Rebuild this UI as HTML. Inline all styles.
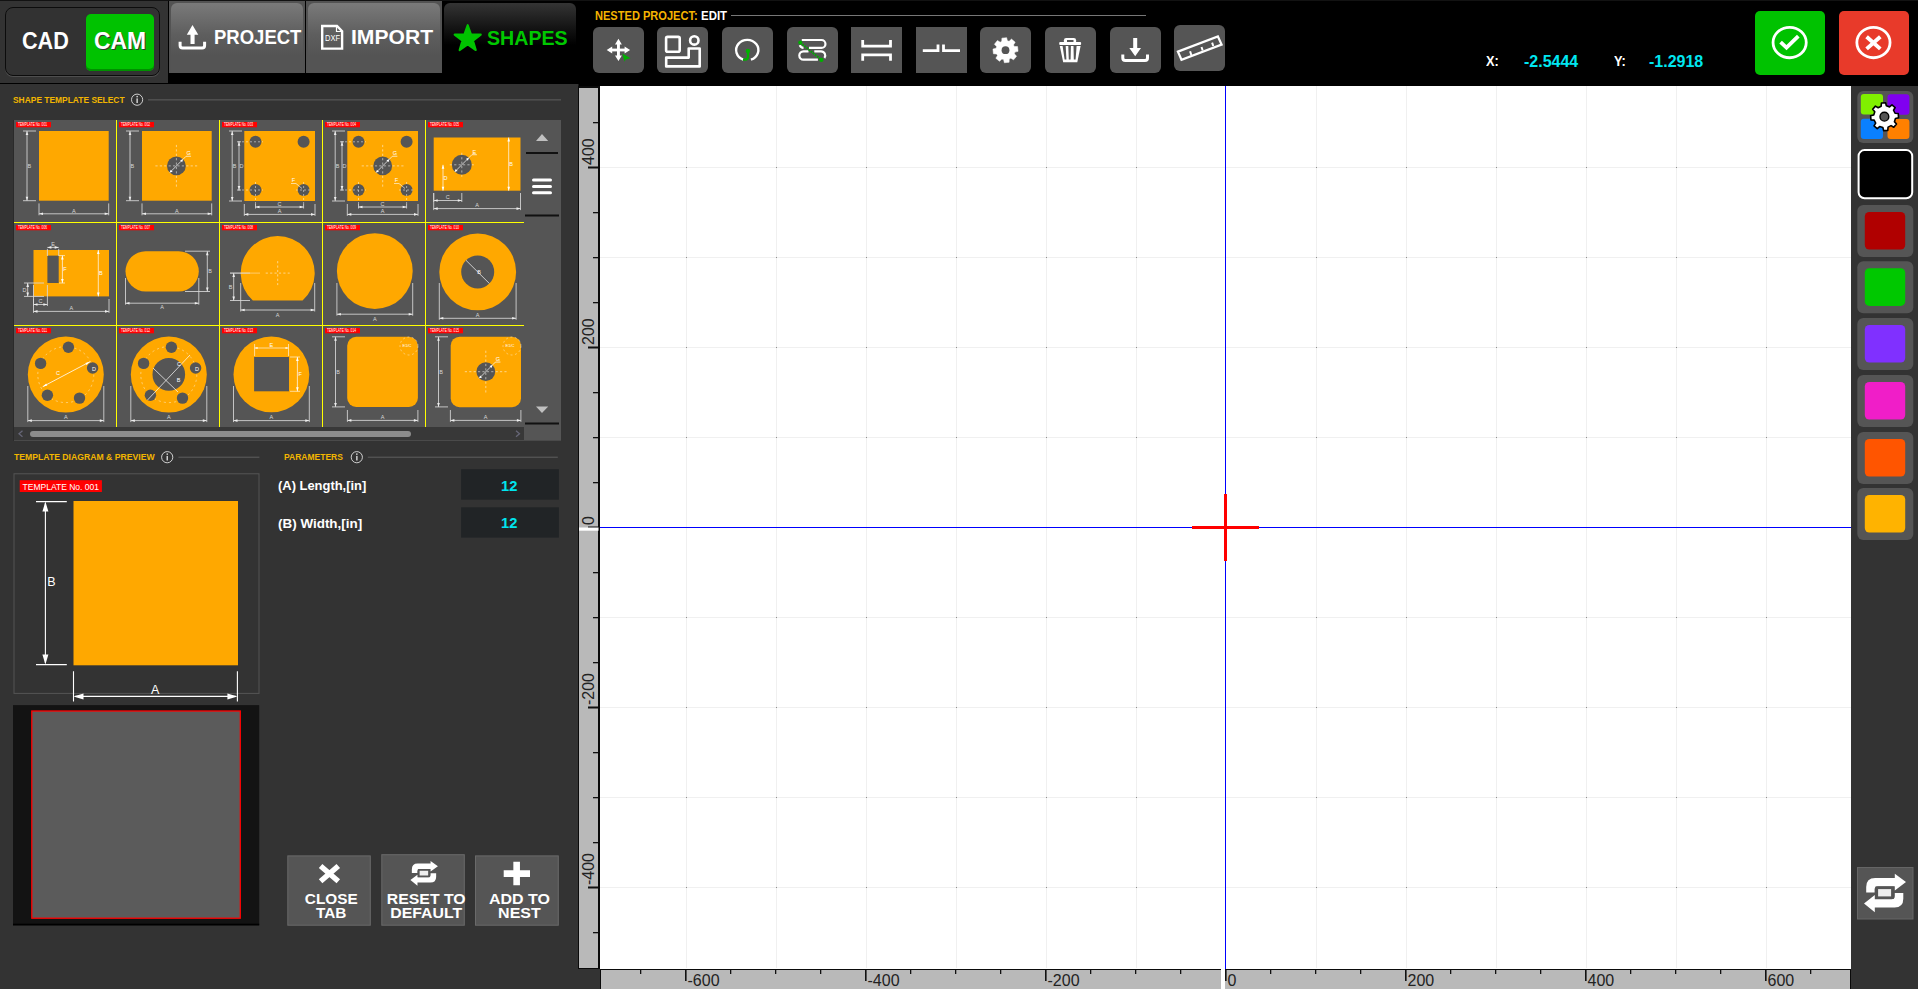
<!DOCTYPE html>
<html><head><meta charset="utf-8">
<style>
*{box-sizing:border-box;margin:0;padding:0}
html,body{width:1918px;height:989px;overflow:hidden;background:#000;font-family:"Liberation Sans",sans-serif;font-weight:bold;color:#fff}
.a{position:absolute}
.t{position:absolute;white-space:nowrap;transform-origin:0 50%;line-height:1}
svg{position:absolute;overflow:visible}
</style></head><body>

<!-- CAD/CAM -->
<div class="a" style="left:0;top:1px;width:168px;height:82px;background:#333"></div>
<div class="a" style="left:5px;top:7px;width:155px;height:69px;border:1.5px solid #0c0c0c;border-radius:8px;background:#323232;box-shadow:0 1px 0 #4e4e4e"></div>
<div class="t" style="left:22.2px;top:30.3px;font-size:23px;transform:scaleX(.94)">CAD</div>
<div class="a" style="left:86px;top:14px;width:68px;height:57px;background:#00c200;border-radius:5px;box-shadow:inset 0 -2px 0 #009000"></div>
<div class="t" style="left:93.8px;top:30.3px;font-size:23px;transform:scaleX(.995);text-shadow:1px 1px 0 #333">CAM</div>

<!-- top tabs -->
<div class="a" style="left:0;top:0;width:1918px;height:1px;background:#121212"></div>
<div class="a" style="left:169px;top:1px;width:136px;height:72px;background:#535353"></div>
<div class="a" style="left:306px;top:1px;width:136px;height:72px;background:#535353"></div>
<div class="a" style="left:171px;top:3px;width:132px;height:70px;border-radius:6px 6px 0 0;background:linear-gradient(#7a7a7a,#5e5e5e 45%,#545454 75%)"></div>
<div class="a" style="left:308px;top:3px;width:132px;height:70px;border-radius:6px 6px 0 0;background:linear-gradient(#7a7a7a,#5e5e5e 45%,#545454 75%)"></div>
<div class="a" style="left:444px;top:3px;width:132px;height:70px;border-radius:6px 6px 0 0;background:linear-gradient(#343434,#101010 40%,#000 60%)"></div>
<div class="t" style="left:213.8px;top:27.4px;font-size:20px;transform:scaleX(.925)">PROJECT</div>
<div class="t" style="left:350.5px;top:27.2px;font-size:20px;transform:scaleX(1.055)">IMPORT</div>
<div class="t" style="left:487px;top:27.6px;font-size:20px;color:#00c800;transform:scaleX(.98)">SHAPES</div>

<!-- nested project label -->
<div class="t" style="left:595px;top:9.8px;font-size:12.3px;color:#f5b400;transform:scaleX(.9)">NESTED PROJECT:</div>
<div class="t" style="left:701px;top:9.8px;font-size:12.3px;transform:scaleX(.93)">EDIT</div>
<div class="a" style="left:731px;top:15px;width:415px;height:1px;background:#777"></div>

<!-- coordinates -->
<div class="t" style="left:1486px;top:53.2px;font-size:15px;transform:scaleX(.85)">X:</div>
<div class="t" style="left:1524px;top:54px;font-size:16px;color:#00e6f0">-2.5444</div>
<div class="t" style="left:1614px;top:53.2px;font-size:15px;transform:scaleX(.85)">Y:</div>
<div class="t" style="left:1649px;top:54px;font-size:16px;color:#00e6f0">-1.2918</div>

<!-- ok / cancel -->
<div class="a" style="left:1755px;top:11px;width:70px;height:64px;background:#00c200;border-radius:5px"></div>
<div class="a" style="left:1839px;top:11px;width:70px;height:64px;background:#e83a2a;border-radius:5px"></div>

<!-- header icons -->
<svg style="left:0;top:0" width="1918" height="86" viewBox="0 0 1918 86">
 <!-- upload -->
 <path d="M192.5,25 L198.3,34.8 L194.6,34.8 L194.6,44 L190.5,44 L190.5,34.8 L186.8,34.8Z" fill="#fff"/>
 <path d="M180.1,41.7 V45.5 Q180.1,48 182.6,48 H202.1 Q204.6,48 204.6,45.5 V41.7" fill="none" stroke="#fff" stroke-width="3"/>
 <!-- dxf doc -->
 <path d="M322.2,26 H337 L342.1,31.2 V48.6 H322.2Z" fill="none" stroke="#fff" stroke-width="2.4"/>
 <path d="M336.5,26 V31.5 H342" fill="none" stroke="#fff" stroke-width="1.2"/>
 <text x="325" y="41.3" font-family="Liberation Sans" font-size="8.6" font-weight="normal" fill="#fff" textLength="15" lengthAdjust="spacingAndGlyphs">DXF</text>
 <!-- star -->
 <polygon points="467.7,25.1 471.0,34.4 480.8,34.6 473.0,40.6 475.8,50.1 467.7,44.5 459.6,50.1 462.4,40.6 454.6,34.6 464.4,34.4" fill="#00c400" stroke="#00c400" stroke-width="2" stroke-linejoin="round"/>
 <!-- toolbar buttons -->
 <g fill="#555">
  <rect x="593" y="27" width="51" height="46" rx="6"/>
  <rect x="657" y="27" width="51" height="46" rx="6"/>
  <rect x="722" y="27" width="51" height="46" rx="6"/>
  <rect x="787" y="27" width="51" height="46" rx="6"/>
  <rect x="851" y="27" width="51" height="46"/>
  <rect x="916" y="27" width="51" height="46"/>
  <rect x="980" y="27" width="51" height="46" rx="6"/>
  <rect x="1045" y="27" width="51" height="46" rx="6"/>
  <rect x="1110" y="27" width="51" height="46" rx="6"/>
  <rect x="1174" y="25" width="51" height="46" rx="6"/>
 </g>
 <!-- move -->
 <g fill="#fff">
  <rect x="611" y="48.6" width="15" height="2.8"/>
  <rect x="617" y="43" width="2.9" height="14"/>
  <path d="M606.7,50 L612.2,46.6 V53.4Z M630.1,50 L624.6,46.6 V53.4Z M618.45,38.8 L615,44.4 H621.9Z M618.45,61 L615,55.4 H621.9Z"/>
 </g>
 <path d="M622.3,53.4 L630.6,58.3 L625.8,59.2 L624.6,61.8Z" fill="#00b000"/>
 <!-- shapes -->
 <g fill="none" stroke="#fff" stroke-width="2.6">
  <rect x="666.1" y="36.9" width="13.6" height="14.9" rx="1.5"/>
  <circle cx="694.3" cy="40.4" r="4.2"/>
  <path d="M688.7,48.5 H699.7 V66.4 H666.2 V57.6 H688.7Z" stroke-linejoin="round"/>
 </g>
 <!-- circle lead -->
 <path d="M743.3,59.6 A11.1,10.2 0 1 1 750.9,59.7" fill="none" stroke="#fff" stroke-width="2.4"/>
 <path d="M748,51 V56.8 Q748,59.6 745,59.7 H743" fill="none" stroke="#00b000" stroke-width="2.3"/>
 <circle cx="747.9" cy="50.9" r="2.2" fill="#00b000"/>
 <!-- obround -->
 <g fill="none" stroke="#fff" stroke-width="2.2">
  <path d="M801.8,40 H821.5 A3.95,3.95 0 0 1 821.5,47.9 H809 M803.5,47.9 A3.95,3.95 0 0 1 799.8,45.2"/>
  <path d="M808.5,51.3 H803.5 A4.2,4.2 0 0 0 803.5,59.7 H817.9 M814.3,51.3 H821 A4.2,4.2 0 0 1 824.4,58"/>
 </g>
 <line x1="800.3" y1="42.6" x2="821.4" y2="59.9" stroke="#00a800" stroke-width="2" stroke-dasharray="1.7 1"/>
 <circle cx="800.3" cy="42.6" r="2.1" fill="#00b000"/><circle cx="821.4" cy="59.9" r="2.1" fill="#00b000"/>
 <!-- brackets -->
 <g fill="none" stroke="#fff" stroke-width="2.8" stroke-linecap="butt">
  <path d="M862.7,40 V46.2 H890.5 V40"/>
  <path d="M862.7,60.8 V54.8 H890.5 V60.8"/>
  <path d="M922.8,50.6 H938 V44.6 M943.5,44.6 V50.6 H960"/>
 </g>
 <!-- gear -->
 <path d="M1014.34,46.46 L1017.57,46.60 L1018.05,51.33 L1014.91,52.11 L1014.40,53.81 L1016.59,56.19 L1013.57,59.87 L1010.80,58.20 L1009.24,59.04 L1009.10,62.27 L1004.37,62.75 L1003.59,59.61 L1001.89,59.10 L999.51,61.29 L995.83,58.27 L997.50,55.50 L996.66,53.94 L993.43,53.80 L992.95,49.07 L996.09,48.29 L996.60,46.59 L994.41,44.21 L997.43,40.53 L1000.20,42.20 L1001.76,41.36 L1001.90,38.13 L1006.63,37.65 L1007.41,40.79 L1009.11,41.30 L1011.49,39.11 L1015.17,42.13 L1013.50,44.90Z" fill="#fff" stroke="#fff" stroke-width=".5" stroke-linejoin="round"/>
 <circle cx="1005.5" cy="50.2" r="3.9" fill="#555"/>
 <!-- trash -->
 <path d="M1063.9,42.2 V40.2 Q1063.9,37.9 1066.2,37.9 H1073.8 Q1076.1,37.9 1076.1,40.2 V42.2Z" fill="#fff"/>
 <rect x="1067" y="40" width="6.5" height="2.3" fill="#555"/>
 <rect x="1059.2" y="42.1" width="21.9" height="2.9" rx="1" fill="#fff"/>
 <path d="M1059.8,46 H1080.6 L1077.3,62.2 H1063.2Z" fill="#fff"/>
 <path d="M1062.6,46 H1065.7 L1066.4,59.5 H1064.6Z M1068.3,46 H1070.9 L1070.6,59.5 H1068.8Z M1073.5,46 H1076.6 L1075.6,59.5 H1073.8Z" fill="#555"/>
 <!-- download -->
 <path d="M1133.2,38 H1137.2 V48 H1141 L1135.2,56.2 L1129.3,48 H1133.2Z" fill="#fff"/>
 <path d="M1122.8,54.6 V58 Q1122.8,60.5 1125.3,60.5 H1145 Q1147.5,60.5 1147.5,58 V54.6" fill="none" stroke="#fff" stroke-width="3"/>
 <!-- ruler -->
 <g fill="none" stroke="#fff" stroke-width="2.2" stroke-linejoin="miter">
  <path d="M1177.9,51.6 L1217.9,36.5 L1221.6,44.6 L1181.5,59.8Z"/>
  <path d="M1191.3,55 L1190.1,51.3 M1202.7,50.5 L1201.5,47 M1213.3,46 L1212.1,42.7" stroke-width="2"/>
 </g>
 <!-- ok / cancel icons -->
 <ellipse cx="1789.65" cy="42.55" rx="16.6" ry="15.2" fill="none" stroke="#fff" stroke-width="2.8"/>
 <path d="M1780.6,42.2 L1786.5,47.6 L1798.3,36.2" fill="none" stroke="#fff" stroke-width="3.8"/>
 <ellipse cx="1873.45" cy="42.55" rx="16.6" ry="15.2" fill="none" stroke="#fff" stroke-width="2.8"/>
 <path d="M1866.6,36.8 L1880.3,48.9 M1880.3,36.8 L1866.6,48.9" fill="none" stroke="#fff" stroke-width="3.9"/>
</svg>

<!-- left panel -->
<div class="a" style="left:0;top:84px;width:578px;height:905px;background:#333"></div>
<div class="a" style="left:578px;top:84px;width:1px;height:905px;background:#161616"></div>

<!-- panel titles -->
<div class="t" style="left:12.6px;top:95.5px;font-size:9.3px;color:#f2b600;transform:scaleX(.905)">SHAPE TEMPLATE SELECT</div>
<div class="t" style="left:14.2px;top:453.1px;font-size:9.3px;color:#f2b600;transform:scaleX(.93)">TEMPLATE DIAGRAM &amp; PREVIEW</div>
<div class="t" style="left:283.9px;top:453px;font-size:9.3px;color:#f2b600;transform:scaleX(.914)">PARAMETERS</div>
<svg style="left:0;top:0" width="580" height="989" viewBox="0 0 580 989" font-family="Liberation Sans">
 <g fill="none" stroke="#cfcfcf" stroke-width="1">
  <circle cx="137.1" cy="99.7" r="5.6"/>
  <circle cx="167.2" cy="457.2" r="5.6"/>
  <circle cx="356.8" cy="457.2" r="5.6"/>
 </g>
 <g fill="#cfcfcf">
  <rect x="136.4" y="98.4" width="1.5" height="4.6"/><circle cx="137.15" cy="96.6" r=".85"/>
  <rect x="166.5" y="455.9" width="1.5" height="4.6"/><circle cx="167.25" cy="454.1" r=".85"/>
  <rect x="356.1" y="455.9" width="1.5" height="4.6"/><circle cx="356.85" cy="454.1" r=".85"/>
 </g>
 <g fill="#555">
  <rect x="148" y="99.2" width="413" height="1.3"/>
  <rect x="178.4" y="456.6" width="81" height="1.3"/>
  <rect x="367.8" y="456.6" width="190" height="1.3"/>
 </g>
 <!-- diagram box -->
 <rect x="14" y="473.8" width="245" height="219.6" fill="none" stroke="#555" stroke-width="1"/>
 <rect x="19.7" y="480.2" width="82.2" height="11.8" fill="#f00"/>
 <text x="22.5" y="489.6" font-size="9" font-weight="normal" fill="#fff" textLength="76.5" lengthAdjust="spacingAndGlyphs">TEMPLATE No. 001</text>
 <rect x="73.5" y="501" width="164.5" height="164.3" fill="#ffa800"/>
 <g stroke="#fff" stroke-width="1.1" fill="none">
  <path d="M45.4,503 V663 M36,501.6 H66.8 M36,664.6 H66.8"/>
  <path d="M75,696.4 H236 M73.5,671.3 V701.6 M237.4,671.3 V701.6"/>
 </g>
 <g fill="#fff">
  <path d="M45.4,501.6 l-3,10 h6z M45.4,664.6 l-3,-10 h6z"/>
  <path d="M73.5,696.4 l10,-3 v6z M237.4,696.4 l-10,-3 v6z"/>
 </g>
 <text x="51.3" y="586.2" font-size="12.5" font-weight="normal" fill="#fff" text-anchor="middle">B</text>
 <text x="155.2" y="694" font-size="12.5" font-weight="normal" fill="#fff" text-anchor="middle">A</text>
 <!-- preview -->
 <rect x="13" y="705.1" width="246.2" height="220.2" fill="#131313"/>
 <rect x="31.8" y="711" width="208.5" height="207.2" fill="#5b5b5b" stroke="#f00" stroke-width="1.3"/>
 <rect x="13" y="923.7" width="246.2" height="1.7" fill="#000"/>
 <!-- inputs -->
 <rect x="461.1" y="469.2" width="97.8" height="30.5" fill="#212426"/>
 <rect x="461.1" y="507.3" width="97.8" height="30.3" fill="#212426"/>
 <!-- buttons -->
 <g fill="#555" stroke="#6a6a6a" stroke-width="1">
  <rect x="287.8" y="855.9" width="82.5" height="69.3"/>
  <rect x="381.8" y="854.7" width="82.5" height="70.5"/>
  <rect x="475.5" y="855.9" width="82.8" height="69.3"/>
 </g>
 <path d="M320.6,866 L338.3,881.3 M338.3,866 L320.6,881.3" stroke="#fff" stroke-width="5.4"/>
 <path d="M503.7,873.65 H530 M516.65,861.8 V885.3" stroke="#fff" stroke-width="6.6"/>
 <!-- reset icon -->
 <g transform="translate(410.4 860.9) scale(.655 .646) translate(-1864 -873.8)">
 <g fill="#fff">
  <path d="M1866.2,892.6 V887 Q1866.2,878 1875.2,878 H1894.8 V873.8 L1906,882.1 L1894.8,890.4 V886.2 H1878 Q1874.6,886.2 1874.6,889.6 V892.6 Z"/>
  <path d="M1903.3,893.1 V898.7 Q1903.3,907.4 1894.6,907.4 H1874.8 V912.2 L1864,903.5 L1874.8,895.1 V899.2 H1891.6 Q1894.8,899.2 1894.8,896 V893.1 Z"/>
 </g>
 <rect x="1876.8" y="887.8" width="15.6" height="9.9" fill="#eee" stroke="#555" stroke-width="2.6"/>
 </g>
</svg>
<div class="t" style="left:278px;top:480.3px;font-size:12.8px;transform:scaleX(1.01)">(A) Length,[in]</div>
<div class="t" style="left:278px;top:517.8px;font-size:12.8px;transform:scaleX(1.05)">(B) Width,[in]</div>
<div class="t" style="left:501px;top:477.9px;font-size:15px;color:#00e5ee;transform:scaleX(.98)">12</div>
<div class="t" style="left:501px;top:515.3px;font-size:15px;color:#00e5ee;transform:scaleX(.98)">12</div>
<div class="a" style="left:289.8px;top:892px;width:82.5px;text-align:center;font-size:15.5px;line-height:13.7px;transform:scaleX(.99)">CLOSE<br>TAB</div>
<div class="a" style="left:384.8px;top:892px;width:82.5px;text-align:center;font-size:15.5px;line-height:13.7px;transform:scaleX(1.02)">RESET TO<br>DEFAULT</div>
<div class="a" style="left:477.8px;top:892px;width:82.8px;text-align:center;font-size:15.5px;line-height:13.7px;transform:scaleX(1.03)">ADD TO<br>NEST</div>

<!-- CELLS_START -->
<svg style="left:0;top:0" width="580" height="445" viewBox="0 0 580 445" font-family="Liberation Sans">
<rect x="14" y="120" width="547" height="320.7" fill="#555"/>
<rect x="13" y="120" width="1" height="320.7" fill="#2a2a2a"/>
<rect x="14" y="427" width="510" height="13" fill="#383838"/>
<rect x="30" y="431" width="381" height="6" rx="3" fill="#8c8c8c"/>
<path d="M22.5,430.8 L19,433.8 L22.5,436.8 M516,430.8 L519.5,433.8 L516,436.8" stroke="#667" stroke-width="1.3" fill="none"/>
<g fill="#ff0">
<rect x="116" y="120" width="1" height="307"/>
<rect x="219" y="120" width="1" height="307"/>
<rect x="322" y="120" width="1" height="307"/>
<rect x="425" y="120" width="1" height="307"/>
<rect x="14" y="222" width="510" height="1"/>
<rect x="14" y="325" width="510" height="1"/>
</g>
<g transform="translate(14 120)"><rect x="2" y="2" width="35" height="5.3" fill="#f00"/><text x="4" y="6.4" font-size="4.5" font-weight="normal" fill="#fff" textLength="29" lengthAdjust="spacingAndGlyphs">TEMPLATE No. 001</text><rect x="25" y="11" width="69.7" height="69.7" fill="#ffa800"/><path d="M13,11V80.7M9,11H22M9,80.7H22" stroke="#d8d8d8" stroke-width=".85" fill="none"/><path d="M13,11 L11.7,15 L14.3,15Z" fill="#eee"/><path d="M13,80.7 L11.7,76.7 L14.3,76.7Z" fill="#eee"/><text x="15.3" y="47.85" font-size="5.5" font-weight="normal" fill="#d8d8d8" text-anchor="middle">B</text><path d="M25,93.8H94.7M25,83.4V95.3M94.7,83.4V95.3" stroke="#d8d8d8" stroke-width=".85" fill="none"/><path d="M25,93.8 L29,92.5 L29,95.1Z" fill="#eee"/><path d="M94.7,93.8 L90.7,92.5 L90.7,95.1Z" fill="#eee"/><text x="59.85" y="92.6" font-size="5.5" font-weight="normal" fill="#d8d8d8" text-anchor="middle">A</text></g>
<g transform="translate(117 120)"><rect x="2" y="2" width="35" height="5.3" fill="#f00"/><text x="4" y="6.4" font-size="4.5" font-weight="normal" fill="#fff" textLength="29" lengthAdjust="spacingAndGlyphs">TEMPLATE No. 002</text><rect x="25" y="11" width="69.7" height="69.7" fill="#ffa800"/><circle cx="59.4" cy="45.9" r="9.4" fill="#555"/><path d="M38.4,45.9H80.4M59.4,24.9V66.9" stroke="#fff" stroke-opacity=".75" stroke-width=".7" stroke-dasharray="2.2 2.2" fill="none"/><path d="M52.75,52.55L66.05,39.25L69.05,36.25H74.05" stroke="#fff" stroke-width=".7" fill="none"/><path d="M52.75,52.55l2.9,-.9l-2,-2z M66.05,39.25l-2.9,.9l2,2z" fill="#fff"/><text x="71.55" y="35.25" font-size="5.5" font-weight="normal" fill="#fff" text-anchor="middle">G</text><path d="M13,11V80.7M9,11H22M9,80.7H22" stroke="#d8d8d8" stroke-width=".85" fill="none"/><path d="M13,11 L11.7,15 L14.3,15Z" fill="#eee"/><path d="M13,80.7 L11.7,76.7 L14.3,76.7Z" fill="#eee"/><text x="15.3" y="47.85" font-size="5.5" font-weight="normal" fill="#d8d8d8" text-anchor="middle">B</text><path d="M25,93.8H94.7M25,83.4V95.3M94.7,83.4V95.3" stroke="#d8d8d8" stroke-width=".85" fill="none"/><path d="M25,93.8 L29,92.5 L29,95.1Z" fill="#eee"/><path d="M94.7,93.8 L90.7,92.5 L90.7,95.1Z" fill="#eee"/><text x="59.85" y="92.6" font-size="5.5" font-weight="normal" fill="#d8d8d8" text-anchor="middle">A</text></g>
<g transform="translate(220 120)"><rect x="2" y="2" width="35" height="5.3" fill="#f00"/><text x="4" y="6.4" font-size="4.5" font-weight="normal" fill="#fff" textLength="29" lengthAdjust="spacingAndGlyphs">TEMPLATE No. 003</text><rect x="24.3" y="11" width="70.7" height="70" fill="#ffa800"/><circle cx="35.5" cy="21.8" r="6" fill="#555"/><circle cx="83.6" cy="21.8" r="6" fill="#555"/><circle cx="35.5" cy="70" r="6" fill="#555"/><circle cx="83.6" cy="70" r="6" fill="#555"/><path d="M18,21.8H43 M18,70H43 M35.5,62V84 M83.6,62V84 M76,70H92" stroke="#fff" stroke-opacity=".7" stroke-width=".7" stroke-dasharray="2 2" fill="none"/><path d="M71,63.5 H76 L82,68.5" stroke="#fff" stroke-width=".6" fill="none"/><text x="73.5" y="61.5" font-size="5.5" font-weight="normal" fill="#fff" text-anchor="middle">F</text><path d="M12.2,11V81M9,11H22M9,81H22" stroke="#d8d8d8" stroke-width=".85" fill="none"/><path d="M12.2,11 L10.9,15 L13.5,15Z" fill="#eee"/><path d="M12.2,81 L10.9,77 L13.5,77Z" fill="#eee"/><text x="14.5" y="48" font-size="5.5" font-weight="normal" fill="#d8d8d8" text-anchor="middle">B</text><path d="M19,21.8V70M17,21.8H21M17,70H21" stroke="#d8d8d8" stroke-width=".85" fill="none"/><path d="M19,21.8 L17.7,25.8 L20.3,25.8Z" fill="#eee"/><path d="M19,70 L17.7,66 L20.3,66Z" fill="#eee"/><text x="21.5" y="47.9" font-size="5.5" font-weight="normal" fill="#d8d8d8" text-anchor="middle">D</text><path d="M35.5,87H83.6M35.5,84V88.5M83.6,84V88.5" stroke="#d8d8d8" stroke-width=".85" fill="none"/><path d="M35.5,87 L39.5,85.7 L39.5,88.3Z" fill="#eee"/><path d="M83.6,87 L79.6,85.7 L79.6,88.3Z" fill="#eee"/><text x="59.55" y="85.8" font-size="5.5" font-weight="normal" fill="#d8d8d8" text-anchor="middle">C</text><path d="M24.3,94.4H95M24.3,84V95.9M95,84V95.9" stroke="#d8d8d8" stroke-width=".85" fill="none"/><path d="M24.3,94.4 L28.3,93.1 L28.3,95.7Z" fill="#eee"/><path d="M95,94.4 L91,93.1 L91,95.7Z" fill="#eee"/><text x="59.65" y="93.2" font-size="5.5" font-weight="normal" fill="#d8d8d8" text-anchor="middle">A</text></g>
<g transform="translate(323 120)"><rect x="2" y="2" width="35" height="5.3" fill="#f00"/><text x="4" y="6.4" font-size="4.5" font-weight="normal" fill="#fff" textLength="29" lengthAdjust="spacingAndGlyphs">TEMPLATE No. 004</text><rect x="24.3" y="11" width="70.7" height="70" fill="#ffa800"/><circle cx="35.5" cy="21.8" r="6" fill="#555"/><circle cx="83.6" cy="21.8" r="6" fill="#555"/><circle cx="35.5" cy="70" r="6" fill="#555"/><circle cx="83.6" cy="70" r="6" fill="#555"/><path d="M18,21.8H43 M18,70H43 M35.5,62V84 M83.6,62V84 M76,70H92" stroke="#fff" stroke-opacity=".7" stroke-width=".7" stroke-dasharray="2 2" fill="none"/><circle cx="59.7" cy="45.9" r="9.4" fill="#555"/><path d="M38.7,45.9H80.7M59.7,24.9V66.9" stroke="#fff" stroke-opacity=".75" stroke-width=".7" stroke-dasharray="2.2 2.2" fill="none"/><path d="M53.05,52.55L66.35,39.25L69.35,36.25H74.35" stroke="#fff" stroke-width=".7" fill="none"/><path d="M53.05,52.55l2.9,-.9l-2,-2z M66.35,39.25l-2.9,.9l2,2z" fill="#fff"/><text x="71.85" y="35.25" font-size="5.5" font-weight="normal" fill="#fff" text-anchor="middle">G</text><path d="M71,63.5 H76 L82,68.5" stroke="#fff" stroke-width=".6" fill="none"/><text x="73.5" y="61.5" font-size="5.5" font-weight="normal" fill="#fff" text-anchor="middle">F</text><path d="M12.2,11V81M9,11H22M9,81H22" stroke="#d8d8d8" stroke-width=".85" fill="none"/><path d="M12.2,11 L10.9,15 L13.5,15Z" fill="#eee"/><path d="M12.2,81 L10.9,77 L13.5,77Z" fill="#eee"/><text x="14.5" y="48" font-size="5.5" font-weight="normal" fill="#d8d8d8" text-anchor="middle">B</text><path d="M19,21.8V70M17,21.8H21M17,70H21" stroke="#d8d8d8" stroke-width=".85" fill="none"/><path d="M19,21.8 L17.7,25.8 L20.3,25.8Z" fill="#eee"/><path d="M19,70 L17.7,66 L20.3,66Z" fill="#eee"/><text x="21.5" y="47.9" font-size="5.5" font-weight="normal" fill="#d8d8d8" text-anchor="middle">D</text><path d="M35.5,87H83.6M35.5,84V88.5M83.6,84V88.5" stroke="#d8d8d8" stroke-width=".85" fill="none"/><path d="M35.5,87 L39.5,85.7 L39.5,88.3Z" fill="#eee"/><path d="M83.6,87 L79.6,85.7 L79.6,88.3Z" fill="#eee"/><text x="59.55" y="85.8" font-size="5.5" font-weight="normal" fill="#d8d8d8" text-anchor="middle">C</text><path d="M24.3,94.4H95M24.3,84V95.9M95,84V95.9" stroke="#d8d8d8" stroke-width=".85" fill="none"/><path d="M24.3,94.4 L28.3,93.1 L28.3,95.7Z" fill="#eee"/><path d="M95,94.4 L91,93.1 L91,95.7Z" fill="#eee"/><text x="59.65" y="93.2" font-size="5.5" font-weight="normal" fill="#d8d8d8" text-anchor="middle">A</text></g>
<g transform="translate(426 120)"><rect x="2" y="2" width="35" height="5.3" fill="#f00"/><text x="4" y="6.4" font-size="4.5" font-weight="normal" fill="#fff" textLength="29" lengthAdjust="spacingAndGlyphs">TEMPLATE No. 005</text><rect x="7.7" y="17.5" width="86.8" height="53.2" fill="#ffa800"/><circle cx="35.8" cy="44.8" r="10" fill="#555"/><path d="M23.8,44.8H47.8M35.8,32.8V56.8" stroke="#fff" stroke-opacity=".75" stroke-width=".7" stroke-dasharray="2.2 2.2" fill="none"/><path d="M28.73,51.87L42.87,37.73L45.87,34.73H50.87" stroke="#fff" stroke-width=".7" fill="none"/><path d="M28.73,51.87l2.9,-.9l-2,-2z M42.87,37.73l-2.9,.9l2,2z" fill="#fff"/><text x="48.37" y="33.73" font-size="5.5" font-weight="normal" fill="#fff" text-anchor="middle">E</text><path d="M82.7,17.5V70.7" stroke="#fff" stroke-width=".7" fill="none"/><path d="M82.7,17.5 L81.4,21.5 L84,21.5Z M82.7,70.7 L81.4,66.7 L84,66.7Z" fill="#fff"/><text x="85.2" y="46.1" font-size="5.5" font-weight="normal" fill="#fff" text-anchor="middle">B</text><path d="M17,44.8V70.7" stroke="#fff" stroke-width=".7" fill="none"/><path d="M17,44.8 L15.7,48.8 L18.3,48.8Z M17,70.7 L15.7,66.7 L18.3,66.7Z" fill="#fff"/><text x="19.5" y="59.75" font-size="5.5" font-weight="normal" fill="#fff" text-anchor="middle">D</text><path d="M7.7,80.5H35.8M7.7,73V82M35.8,73V82" stroke="#d8d8d8" stroke-width=".85" fill="none"/><path d="M7.7,80.5 L11.7,79.2 L11.7,81.8Z" fill="#eee"/><path d="M35.8,80.5 L31.8,79.2 L31.8,81.8Z" fill="#eee"/><text x="21.75" y="79.3" font-size="5.5" font-weight="normal" fill="#d8d8d8" text-anchor="middle">C</text><path d="M7.7,88.6H94.5M7.7,73V90.1M94.5,73V90.1" stroke="#d8d8d8" stroke-width=".85" fill="none"/><path d="M7.7,88.6 L11.7,87.3 L11.7,89.9Z" fill="#eee"/><path d="M94.5,88.6 L90.5,87.3 L90.5,89.9Z" fill="#eee"/><text x="51.1" y="87.4" font-size="5.5" font-weight="normal" fill="#d8d8d8" text-anchor="middle">A</text></g>
<g transform="translate(14 223)"><rect x="2" y="2" width="35" height="5.3" fill="#f00"/><text x="4" y="6.4" font-size="4.5" font-weight="normal" fill="#fff" textLength="29" lengthAdjust="spacingAndGlyphs">TEMPLATE No. 006</text><rect x="19.5" y="27" width="75.5" height="46.4" fill="#ffa800"/><rect x="33.4" y="32.6" width="11.3" height="27.4" fill="#555"/><path d="M84.3,27V73.4" stroke="#fff" stroke-width=".7" fill="none"/><path d="M84.3,27 L83,31 L85.6,31Z M84.3,73.4 L83,69.4 L85.6,69.4Z" fill="#fff"/><text x="86.8" y="52.2" font-size="5.5" font-weight="normal" fill="#fff" text-anchor="middle">B</text><path d="M48.4,32.6V60" stroke="#fff" stroke-width=".7" fill="none"/><path d="M48.4,32.6 L47.1,36.6 L49.7,36.6Z M48.4,60 L47.1,56 L49.7,56Z" fill="#fff"/><text x="50.9" y="48.3" font-size="5.5" font-weight="normal" fill="#fff" text-anchor="middle">F</text><path d="M45,32.6H51 M45,60H51" stroke="#fff" stroke-width=".6"/><path d="M33.4,24.4H44.7M33.4,33V25.9M44.7,33V25.9" stroke="#d8d8d8" stroke-width=".85" fill="none"/><path d="M33.4,24.4 L37.4,23.1 L37.4,25.7Z" fill="#eee"/><path d="M44.7,24.4 L40.7,23.1 L40.7,25.7Z" fill="#eee"/><text x="39.05" y="23.2" font-size="5.5" font-weight="normal" fill="#d8d8d8" text-anchor="middle">E</text><path d="M13.7,60V73.4M10,60H30M10,73.4H30" stroke="#d8d8d8" stroke-width=".85" fill="none"/><path d="M13.7,60 L12.4,64 L15,64Z" fill="#eee"/><path d="M13.7,73.4 L12.4,69.4 L15,69.4Z" fill="#eee"/><text x="10.5" y="68.7" font-size="5.5" font-weight="normal" fill="#d8d8d8" text-anchor="middle">D</text><path d="M19.5,81.5H33.4M19.5,62V83M33.4,62V83" stroke="#d8d8d8" stroke-width=".85" fill="none"/><path d="M19.5,81.5 L23.5,80.2 L23.5,82.8Z" fill="#eee"/><path d="M33.4,81.5 L29.4,80.2 L29.4,82.8Z" fill="#eee"/><text x="26.45" y="80.3" font-size="5.5" font-weight="normal" fill="#d8d8d8" text-anchor="middle">C</text><path d="M19.5,88.4H95M19.5,76V89.9M95,76V89.9" stroke="#d8d8d8" stroke-width=".85" fill="none"/><path d="M19.5,88.4 L23.5,87.1 L23.5,89.7Z" fill="#eee"/><path d="M95,88.4 L91,87.1 L91,89.7Z" fill="#eee"/><text x="57.25" y="87.2" font-size="5.5" font-weight="normal" fill="#d8d8d8" text-anchor="middle">A</text></g>
<g transform="translate(117 223)"><rect x="2" y="2" width="35" height="5.3" fill="#f00"/><text x="4" y="6.4" font-size="4.5" font-weight="normal" fill="#fff" textLength="29" lengthAdjust="spacingAndGlyphs">TEMPLATE No. 007</text><rect x="8.5" y="28.2" width="73.3" height="40.3" rx="20.15" fill="#ffa800"/><path d="M90.3,28.2V68.5M68,28.2H93M68,68.5H93" stroke="#d8d8d8" stroke-width=".85" fill="none"/><path d="M90.3,28.2 L89,32.2 L91.6,32.2Z" fill="#eee"/><path d="M90.3,68.5 L89,64.5 L91.6,64.5Z" fill="#eee"/><text x="93" y="50.35" font-size="5.5" font-weight="normal" fill="#d8d8d8" text-anchor="middle">B</text><path d="M8.5,80.2H81.8M8.5,55V81.7M81.8,55V81.7" stroke="#d8d8d8" stroke-width=".85" fill="none"/><path d="M8.5,80.2 L12.5,78.9 L12.5,81.5Z" fill="#eee"/><path d="M81.8,80.2 L77.8,78.9 L77.8,81.5Z" fill="#eee"/><text x="45.2" y="86" font-size="5.5" font-weight="normal" fill="#d8d8d8" text-anchor="middle">A</text></g>
<g transform="translate(220 223)"><rect x="2" y="2" width="35" height="5.3" fill="#f00"/><text x="4" y="6.4" font-size="4.5" font-weight="normal" fill="#fff" textLength="29" lengthAdjust="spacingAndGlyphs">TEMPLATE No. 008</text><path d="M32.84,77.5 A37,37 0 1 1 82.56,77.5Z" fill="#ffa800"/><path d="M45.7,50.1H69.7M57.7,38.1V62.1" stroke="#fff" stroke-opacity=".75" stroke-width=".7" stroke-dasharray="2.2 2.2" fill="none"/><path d="M10,50.1H40" stroke="#fff" stroke-opacity=".7" stroke-width=".6"/><path d="M13.7,50.1V77.5M10,50.1H30M10,77.5H30" stroke="#d8d8d8" stroke-width=".85" fill="none"/><path d="M13.7,50.1 L12.4,54.1 L15,54.1Z" fill="#eee"/><path d="M13.7,77.5 L12.4,73.5 L15,73.5Z" fill="#eee"/><text x="10.5" y="65.8" font-size="5.5" font-weight="normal" fill="#d8d8d8" text-anchor="middle">B</text><path d="M20.7,87H94.7M20.7,60V88.5M94.7,60V88.5" stroke="#d8d8d8" stroke-width=".85" fill="none"/><path d="M20.7,87 L24.7,85.7 L24.7,88.3Z" fill="#eee"/><path d="M94.7,87 L90.7,85.7 L90.7,88.3Z" fill="#eee"/><text x="57.7" y="94" font-size="5.5" font-weight="normal" fill="#d8d8d8" text-anchor="middle">A</text></g>
<g transform="translate(323 223)"><rect x="2" y="2" width="35" height="5.3" fill="#f00"/><text x="4" y="6.4" font-size="4.5" font-weight="normal" fill="#fff" textLength="29" lengthAdjust="spacingAndGlyphs">TEMPLATE No. 009</text><circle cx="51.8" cy="48.1" r="37.9" fill="#ffa800"/><path d="M13.9,91.2H89.7M13.9,60V92.7M89.7,60V92.7" stroke="#d8d8d8" stroke-width=".85" fill="none"/><path d="M13.9,91.2 L17.9,89.9 L17.9,92.5Z" fill="#eee"/><path d="M89.7,91.2 L85.7,89.9 L85.7,92.5Z" fill="#eee"/><text x="51.8" y="98" font-size="5.5" font-weight="normal" fill="#d8d8d8" text-anchor="middle">A</text></g>
<g transform="translate(426 223)"><rect x="2" y="2" width="35" height="5.3" fill="#f00"/><text x="4" y="6.4" font-size="4.5" font-weight="normal" fill="#fff" textLength="29" lengthAdjust="spacingAndGlyphs">TEMPLATE No. 010</text><circle cx="51.7" cy="48.9" r="38.4" fill="#ffa800"/><circle cx="51.7" cy="48.9" r="16.5" fill="#555"/><path d="M40,37.3 L63.4,60.5" stroke="#fff" stroke-width=".7"/><text x="53" y="50.5" font-size="5.5" font-weight="normal" fill="#fff" text-anchor="middle">B</text><path d="M13.3,95.3H90.1M13.3,60V96.8M90.1,60V96.8" stroke="#d8d8d8" stroke-width=".85" fill="none"/><path d="M13.3,95.3 L17.3,94 L17.3,96.6Z" fill="#eee"/><path d="M90.1,95.3 L86.1,94 L86.1,96.6Z" fill="#eee"/><text x="51.7" y="94.1" font-size="5.5" font-weight="normal" fill="#d8d8d8" text-anchor="middle">A</text></g>
<g transform="translate(14 326)"><rect x="2" y="2" width="35" height="5.3" fill="#f00"/><text x="4" y="6.4" font-size="4.5" font-weight="normal" fill="#fff" textLength="29" lengthAdjust="spacingAndGlyphs">TEMPLATE No. 011</text><circle cx="51.8" cy="48.6" r="38" fill="#ffa800"/><circle cx="51.8" cy="48.6" r="28" fill="none" stroke="#fff" stroke-opacity=".7" stroke-width=".6" stroke-dasharray="2.2 3"/><circle cx="54.4" cy="21.2" r="5.7" fill="#555"/><circle cx="26.6" cy="37.4" r="5.7" fill="#555"/><circle cx="78.6" cy="42" r="5.7" fill="#555"/><circle cx="33.4" cy="69.2" r="5.7" fill="#555"/><circle cx="65.5" cy="72.1" r="5.7" fill="#555"/><path d="M28.7,60.7 L76,35.7" stroke="#fff" stroke-width=".8"/><path d="M28.7,60.7l4.6,-1.2l-1.1,-2.1z M76,35.7l-4.6,1.2l1.1,2.1z" fill="#fff"/><text x="44" y="49" font-size="5.5" font-weight="normal" fill="#fff" text-anchor="middle">C</text><text x="80" y="44.5" font-size="5.5" font-weight="normal" fill="#fff" text-anchor="middle">D</text><path d="M13.8,94.6H89.8M13.8,60V96.1M89.8,60V96.1" stroke="#d8d8d8" stroke-width=".85" fill="none"/><path d="M13.8,94.6 L17.8,93.3 L17.8,95.9Z" fill="#eee"/><path d="M89.8,94.6 L85.8,93.3 L85.8,95.9Z" fill="#eee"/><text x="51.8" y="93.4" font-size="5.5" font-weight="normal" fill="#d8d8d8" text-anchor="middle">A</text></g>
<g transform="translate(117 326)"><rect x="2" y="2" width="35" height="5.3" fill="#f00"/><text x="4" y="6.4" font-size="4.5" font-weight="normal" fill="#fff" textLength="29" lengthAdjust="spacingAndGlyphs">TEMPLATE No. 012</text><circle cx="51.8" cy="48.6" r="38" fill="#ffa800"/><circle cx="51.8" cy="48.6" r="28" fill="none" stroke="#fff" stroke-opacity=".7" stroke-width=".6" stroke-dasharray="2.2 3"/><circle cx="51.8" cy="48.4" r="16.3" fill="#555"/><circle cx="54.4" cy="21.2" r="5.7" fill="#555"/><circle cx="26.6" cy="37.4" r="5.7" fill="#555"/><circle cx="78.6" cy="42" r="5.7" fill="#555"/><circle cx="33.4" cy="69.2" r="5.7" fill="#555"/><circle cx="65.5" cy="72.1" r="5.7" fill="#555"/><path d="M30.5,74 L73,29 M36,42 L61,66" stroke="#fff" stroke-width=".7"/><text x="62" y="40" font-size="5.5" font-weight="normal" fill="#fff" text-anchor="middle">C</text><text x="61.5" y="55.5" font-size="5.5" font-weight="normal" fill="#fff" text-anchor="middle">B</text><text x="80" y="44.5" font-size="5.5" font-weight="normal" fill="#fff" text-anchor="middle">D</text><path d="M13.8,94.6H89.8M13.8,60V96.1M89.8,60V96.1" stroke="#d8d8d8" stroke-width=".85" fill="none"/><path d="M13.8,94.6 L17.8,93.3 L17.8,95.9Z" fill="#eee"/><path d="M89.8,94.6 L85.8,93.3 L85.8,95.9Z" fill="#eee"/><text x="51.8" y="93.4" font-size="5.5" font-weight="normal" fill="#d8d8d8" text-anchor="middle">A</text></g>
<g transform="translate(220 326)"><rect x="2" y="2" width="35" height="5.3" fill="#f00"/><text x="4" y="6.4" font-size="4.5" font-weight="normal" fill="#fff" textLength="29" lengthAdjust="spacingAndGlyphs">TEMPLATE No. 013</text><circle cx="51.4" cy="48.4" r="37.9" fill="#ffa800"/><rect x="34.1" y="31" width="34.9" height="34.3" fill="#555"/><path d="M34.6,22H68.5 M34.6,18V30 M68.5,18V30" stroke="#fff" stroke-width=".6"/><path d="M34.6,22l3,-1.1v2.2z M68.5,22l-3,-1.1v2.2z" fill="#fff"/><text x="51.4" y="20.5" font-size="5.5" font-weight="normal" fill="#fff" text-anchor="middle">E</text><path d="M77.4,31V65.3" stroke="#fff" stroke-width=".7" fill="none"/><path d="M77.4,31 L76.1,35 L78.7,35Z M77.4,65.3 L76.1,61.3 L78.7,61.3Z" fill="#fff"/><text x="80.2" y="50.15" font-size="5.5" font-weight="normal" fill="#fff" text-anchor="middle">F</text><path d="M70,31H80 M70,65.3H80" stroke="#fff" stroke-width=".6"/><path d="M13.5,94.6H89.3M13.5,60V96.1M89.3,60V96.1" stroke="#d8d8d8" stroke-width=".85" fill="none"/><path d="M13.5,94.6 L17.5,93.3 L17.5,95.9Z" fill="#eee"/><path d="M89.3,94.6 L85.3,93.3 L85.3,95.9Z" fill="#eee"/><text x="51.4" y="93.4" font-size="5.5" font-weight="normal" fill="#d8d8d8" text-anchor="middle">A</text></g>
<g transform="translate(323 326)"><rect x="2" y="2" width="35" height="5.3" fill="#f00"/><text x="4" y="6.4" font-size="4.5" font-weight="normal" fill="#fff" textLength="29" lengthAdjust="spacingAndGlyphs">TEMPLATE No. 014</text><rect x="24.2" y="10.8" width="70.7" height="70.1" rx="9" fill="#ffa800"/><circle cx="86" cy="20" r="9" fill="none" stroke="#fff" stroke-opacity=".7" stroke-width=".6" stroke-dasharray="2 2.5"/><text x="84" y="21" font-size="4" font-weight="normal" fill="#fff" text-anchor="middle">E1/C</text><path d="M12.5,10.8V80.9M9,10.8H22M9,80.9H22" stroke="#d8d8d8" stroke-width=".85" fill="none"/><path d="M12.5,10.8 L11.2,14.8 L13.8,14.8Z" fill="#eee"/><path d="M12.5,80.9 L11.2,76.9 L13.8,76.9Z" fill="#eee"/><text x="15" y="47.85" font-size="5.5" font-weight="normal" fill="#d8d8d8" text-anchor="middle">B</text><path d="M24.4,94.4H94.9M24.4,84V95.9M94.9,84V95.9" stroke="#d8d8d8" stroke-width=".85" fill="none"/><path d="M24.4,94.4 L28.4,93.1 L28.4,95.7Z" fill="#eee"/><path d="M94.9,94.4 L90.9,93.1 L90.9,95.7Z" fill="#eee"/><text x="59.65" y="93.2" font-size="5.5" font-weight="normal" fill="#d8d8d8" text-anchor="middle">A</text></g>
<g transform="translate(426 326)"><rect x="2" y="2" width="35" height="5.3" fill="#f00"/><text x="4" y="6.4" font-size="4.5" font-weight="normal" fill="#fff" textLength="29" lengthAdjust="spacingAndGlyphs">TEMPLATE No. 015</text><rect x="24.7" y="10.7" width="70.3" height="70.5" rx="9" fill="#ffa800"/><circle cx="59.8" cy="45.7" r="9.4" fill="#555"/><path d="M38.8,45.7H80.8M59.8,24.7V66.7" stroke="#fff" stroke-opacity=".75" stroke-width=".7" stroke-dasharray="2.2 2.2" fill="none"/><path d="M53.15,52.35L66.45,39.05L69.45,36.05H74.45" stroke="#fff" stroke-width=".7" fill="none"/><path d="M53.15,52.35l2.9,-.9l-2,-2z M66.45,39.05l-2.9,.9l2,2z" fill="#fff"/><text x="71.95" y="35.05" font-size="5.5" font-weight="normal" fill="#fff" text-anchor="middle">G</text><circle cx="86" cy="20" r="9" fill="none" stroke="#fff" stroke-opacity=".7" stroke-width=".6" stroke-dasharray="2 2.5"/><text x="84" y="21" font-size="4" font-weight="normal" fill="#fff" text-anchor="middle">E1/C</text><path d="M12.5,10.8V80.9M9,10.8H22M9,80.9H22" stroke="#d8d8d8" stroke-width=".85" fill="none"/><path d="M12.5,10.8 L11.2,14.8 L13.8,14.8Z" fill="#eee"/><path d="M12.5,80.9 L11.2,76.9 L13.8,76.9Z" fill="#eee"/><text x="15" y="47.85" font-size="5.5" font-weight="normal" fill="#d8d8d8" text-anchor="middle">B</text><path d="M24.4,94.4H94.9M24.4,84V95.9M94.9,84V95.9" stroke="#d8d8d8" stroke-width=".85" fill="none"/><path d="M24.4,94.4 L28.4,93.1 L28.4,95.7Z" fill="#eee"/><path d="M94.9,94.4 L90.9,93.1 L90.9,95.7Z" fill="#eee"/><text x="59.65" y="93.2" font-size="5.5" font-weight="normal" fill="#d8d8d8" text-anchor="middle">A</text></g>
<path d="M536,141 L542,134 L548.2,141Z" fill="#c0c0c0"/>
<rect x="526" y="152" width="32" height="2" fill="#111"/>
<g stroke="#fff" stroke-width="3" stroke-linecap="round"><path d="M533.5,180H550.5M533.5,186.4H550.5M533.5,192.8H550.5"/></g>
<rect x="525" y="214.5" width="34" height="2" fill="#111"/>
<path d="M536,406.5 L542,413 L548.2,406.5Z" fill="#c0c0c0"/>
<rect x="525" y="422.5" width="34" height="2" fill="#111"/>
</svg>
<!-- CELLS_END -->
<!-- canvas frame -->
<!-- CANVAS_START -->
<svg style="left:0;top:0" width="1918" height="989" viewBox="0 0 1918 989" font-family="Liberation Sans">
<rect x="578" y="968" width="22" height="21" fill="#333"/>
<rect x="578" y="86" width="22" height="883" fill="#0a0a0a"/>
<rect x="579" y="88" width="19" height="880" fill="#b9b9b9"/>
<rect x="600" y="968" width="1251" height="21" fill="#0a0a0a"/>
<rect x="601" y="970" width="1249" height="19" fill="#b9b9b9"/>
<rect x="600" y="86" width="1251" height="883" fill="#fff"/>
<path d="M686.5,86V968M776.5,86V968M866.5,86V968M956.5,86V968M1046.5,86V968M1136.5,86V968M1316.5,86V968M1406.5,86V968M1496.5,86V968M1586.5,86V968M1676.5,86V968M1766.5,86V968M600,167.5H1851M600,257.5H1851M600,347.5H1851M600,437.5H1851M600,617.5H1851M600,707.5H1851M600,797.5H1851M600,887.5H1851" stroke="#f0f0f0" stroke-width="1" fill="none"/>
<rect x="686" y="167" width="1" height="1" fill="#909090"/><rect x="686" y="257" width="1" height="1" fill="#909090"/><rect x="686" y="347" width="1" height="1" fill="#909090"/><rect x="686" y="437" width="1" height="1" fill="#909090"/><rect x="686" y="617" width="1" height="1" fill="#909090"/><rect x="686" y="707" width="1" height="1" fill="#909090"/><rect x="686" y="797" width="1" height="1" fill="#909090"/><rect x="686" y="887" width="1" height="1" fill="#909090"/><rect x="776" y="167" width="1" height="1" fill="#909090"/><rect x="776" y="257" width="1" height="1" fill="#909090"/><rect x="776" y="347" width="1" height="1" fill="#909090"/><rect x="776" y="437" width="1" height="1" fill="#909090"/><rect x="776" y="617" width="1" height="1" fill="#909090"/><rect x="776" y="707" width="1" height="1" fill="#909090"/><rect x="776" y="797" width="1" height="1" fill="#909090"/><rect x="776" y="887" width="1" height="1" fill="#909090"/><rect x="866" y="167" width="1" height="1" fill="#909090"/><rect x="866" y="257" width="1" height="1" fill="#909090"/><rect x="866" y="347" width="1" height="1" fill="#909090"/><rect x="866" y="437" width="1" height="1" fill="#909090"/><rect x="866" y="617" width="1" height="1" fill="#909090"/><rect x="866" y="707" width="1" height="1" fill="#909090"/><rect x="866" y="797" width="1" height="1" fill="#909090"/><rect x="866" y="887" width="1" height="1" fill="#909090"/><rect x="956" y="167" width="1" height="1" fill="#909090"/><rect x="956" y="257" width="1" height="1" fill="#909090"/><rect x="956" y="347" width="1" height="1" fill="#909090"/><rect x="956" y="437" width="1" height="1" fill="#909090"/><rect x="956" y="617" width="1" height="1" fill="#909090"/><rect x="956" y="707" width="1" height="1" fill="#909090"/><rect x="956" y="797" width="1" height="1" fill="#909090"/><rect x="956" y="887" width="1" height="1" fill="#909090"/><rect x="1046" y="167" width="1" height="1" fill="#909090"/><rect x="1046" y="257" width="1" height="1" fill="#909090"/><rect x="1046" y="347" width="1" height="1" fill="#909090"/><rect x="1046" y="437" width="1" height="1" fill="#909090"/><rect x="1046" y="617" width="1" height="1" fill="#909090"/><rect x="1046" y="707" width="1" height="1" fill="#909090"/><rect x="1046" y="797" width="1" height="1" fill="#909090"/><rect x="1046" y="887" width="1" height="1" fill="#909090"/><rect x="1136" y="167" width="1" height="1" fill="#909090"/><rect x="1136" y="257" width="1" height="1" fill="#909090"/><rect x="1136" y="347" width="1" height="1" fill="#909090"/><rect x="1136" y="437" width="1" height="1" fill="#909090"/><rect x="1136" y="617" width="1" height="1" fill="#909090"/><rect x="1136" y="707" width="1" height="1" fill="#909090"/><rect x="1136" y="797" width="1" height="1" fill="#909090"/><rect x="1136" y="887" width="1" height="1" fill="#909090"/><rect x="1316" y="167" width="1" height="1" fill="#909090"/><rect x="1316" y="257" width="1" height="1" fill="#909090"/><rect x="1316" y="347" width="1" height="1" fill="#909090"/><rect x="1316" y="437" width="1" height="1" fill="#909090"/><rect x="1316" y="617" width="1" height="1" fill="#909090"/><rect x="1316" y="707" width="1" height="1" fill="#909090"/><rect x="1316" y="797" width="1" height="1" fill="#909090"/><rect x="1316" y="887" width="1" height="1" fill="#909090"/><rect x="1406" y="167" width="1" height="1" fill="#909090"/><rect x="1406" y="257" width="1" height="1" fill="#909090"/><rect x="1406" y="347" width="1" height="1" fill="#909090"/><rect x="1406" y="437" width="1" height="1" fill="#909090"/><rect x="1406" y="617" width="1" height="1" fill="#909090"/><rect x="1406" y="707" width="1" height="1" fill="#909090"/><rect x="1406" y="797" width="1" height="1" fill="#909090"/><rect x="1406" y="887" width="1" height="1" fill="#909090"/><rect x="1496" y="167" width="1" height="1" fill="#909090"/><rect x="1496" y="257" width="1" height="1" fill="#909090"/><rect x="1496" y="347" width="1" height="1" fill="#909090"/><rect x="1496" y="437" width="1" height="1" fill="#909090"/><rect x="1496" y="617" width="1" height="1" fill="#909090"/><rect x="1496" y="707" width="1" height="1" fill="#909090"/><rect x="1496" y="797" width="1" height="1" fill="#909090"/><rect x="1496" y="887" width="1" height="1" fill="#909090"/><rect x="1586" y="167" width="1" height="1" fill="#909090"/><rect x="1586" y="257" width="1" height="1" fill="#909090"/><rect x="1586" y="347" width="1" height="1" fill="#909090"/><rect x="1586" y="437" width="1" height="1" fill="#909090"/><rect x="1586" y="617" width="1" height="1" fill="#909090"/><rect x="1586" y="707" width="1" height="1" fill="#909090"/><rect x="1586" y="797" width="1" height="1" fill="#909090"/><rect x="1586" y="887" width="1" height="1" fill="#909090"/><rect x="1676" y="167" width="1" height="1" fill="#909090"/><rect x="1676" y="257" width="1" height="1" fill="#909090"/><rect x="1676" y="347" width="1" height="1" fill="#909090"/><rect x="1676" y="437" width="1" height="1" fill="#909090"/><rect x="1676" y="617" width="1" height="1" fill="#909090"/><rect x="1676" y="707" width="1" height="1" fill="#909090"/><rect x="1676" y="797" width="1" height="1" fill="#909090"/><rect x="1676" y="887" width="1" height="1" fill="#909090"/><rect x="1766" y="167" width="1" height="1" fill="#909090"/><rect x="1766" y="257" width="1" height="1" fill="#909090"/><rect x="1766" y="347" width="1" height="1" fill="#909090"/><rect x="1766" y="437" width="1" height="1" fill="#909090"/><rect x="1766" y="617" width="1" height="1" fill="#909090"/><rect x="1766" y="707" width="1" height="1" fill="#909090"/><rect x="1766" y="797" width="1" height="1" fill="#909090"/><rect x="1766" y="887" width="1" height="1" fill="#909090"/>
<rect x="1225" y="86" width="1" height="883" fill="#0000ff"/>
<rect x="600" y="527" width="1251" height="1" fill="#0000ff"/>
<rect x="1192" y="526" width="67" height="3" fill="#ff0000"/>
<rect x="1224" y="494" width="3" height="67" fill="#ff0000"/>
<rect x="593" y="122" width="5" height="1.3" fill="#111"/><rect x="588" y="166.5" width="10" height="2" fill="#111"/><rect x="593" y="212" width="5" height="1.3" fill="#111"/><rect x="593" y="257" width="5" height="1.3" fill="#111"/><rect x="593" y="302" width="5" height="1.3" fill="#111"/><rect x="588" y="346.5" width="10" height="2" fill="#111"/><rect x="593" y="392" width="5" height="1.3" fill="#111"/><rect x="593" y="437" width="5" height="1.3" fill="#111"/><rect x="593" y="482" width="5" height="1.3" fill="#111"/><rect x="588" y="526.5" width="10" height="2" fill="#111"/><rect x="593" y="572" width="5" height="1.3" fill="#111"/><rect x="593" y="617" width="5" height="1.3" fill="#111"/><rect x="593" y="662" width="5" height="1.3" fill="#111"/><rect x="588" y="706.5" width="10" height="2" fill="#111"/><rect x="593" y="752" width="5" height="1.3" fill="#111"/><rect x="593" y="797" width="5" height="1.3" fill="#111"/><rect x="593" y="842" width="5" height="1.3" fill="#111"/><rect x="588" y="886.5" width="10" height="2" fill="#111"/><rect x="593" y="932" width="5" height="1.3" fill="#111"/><rect x="640" y="970" width="1.3" height="4" fill="#111"/><rect x="685" y="970" width="1.6" height="11" fill="#111"/><rect x="730" y="970" width="1.3" height="4" fill="#111"/><rect x="775" y="970" width="1.3" height="4" fill="#111"/><rect x="820" y="970" width="1.3" height="4" fill="#111"/><rect x="865" y="970" width="1.6" height="11" fill="#111"/><rect x="910" y="970" width="1.3" height="4" fill="#111"/><rect x="955" y="970" width="1.3" height="4" fill="#111"/><rect x="1000" y="970" width="1.3" height="4" fill="#111"/><rect x="1045" y="970" width="1.6" height="11" fill="#111"/><rect x="1090" y="970" width="1.3" height="4" fill="#111"/><rect x="1135" y="970" width="1.3" height="4" fill="#111"/><rect x="1180" y="970" width="1.3" height="4" fill="#111"/><rect x="1225" y="970" width="1.6" height="11" fill="#111"/><rect x="1270" y="970" width="1.3" height="4" fill="#111"/><rect x="1315" y="970" width="1.3" height="4" fill="#111"/><rect x="1360" y="970" width="1.3" height="4" fill="#111"/><rect x="1405" y="970" width="1.6" height="11" fill="#111"/><rect x="1450" y="970" width="1.3" height="4" fill="#111"/><rect x="1495" y="970" width="1.3" height="4" fill="#111"/><rect x="1540" y="970" width="1.3" height="4" fill="#111"/><rect x="1585" y="970" width="1.6" height="11" fill="#111"/><rect x="1630" y="970" width="1.3" height="4" fill="#111"/><rect x="1675" y="970" width="1.3" height="4" fill="#111"/><rect x="1720" y="970" width="1.3" height="4" fill="#111"/><rect x="1765" y="970" width="1.6" height="11" fill="#111"/><rect x="1810" y="970" width="1.3" height="4" fill="#111"/>
<text transform="translate(594.3 165) rotate(-90)" font-size="16" font-weight="normal" fill="#222">400</text><text transform="translate(594.3 345) rotate(-90)" font-size="16" font-weight="normal" fill="#222">200</text><text transform="translate(594.3 525) rotate(-90)" font-size="16" font-weight="normal" fill="#222">0</text><text transform="translate(594.3 705) rotate(-90)" font-size="16" font-weight="normal" fill="#222">-200</text><text transform="translate(594.3 885) rotate(-90)" font-size="16" font-weight="normal" fill="#222">-400</text><text x="687.5" y="986" font-size="16" font-weight="normal" fill="#222">-600</text><text x="867.5" y="986" font-size="16" font-weight="normal" fill="#222">-400</text><text x="1047.5" y="986" font-size="16" font-weight="normal" fill="#222">-200</text><text x="1227.5" y="986" font-size="16" font-weight="normal" fill="#222">0</text><text x="1407.5" y="986" font-size="16" font-weight="normal" fill="#222">200</text><text x="1587.5" y="986" font-size="16" font-weight="normal" fill="#222">400</text><text x="1767.5" y="986" font-size="16" font-weight="normal" fill="#222">600</text>
<rect x="579" y="527.5" width="19.5" height="3.2" fill="#fff"/>
<rect x="1221" y="968" width="4" height="21" fill="#fff"/>
<rect x="1851" y="86" width="67" height="903" fill="#333"/>
<rect x="1857.3" y="91" width="56" height="52" rx="6" fill="#555"/>
<g><rect x="1860.8" y="94" width="22.2" height="20.5" rx="3" fill="#80f000"/><rect x="1887.5" y="94.2" width="21.9" height="20.5" rx="3" fill="#8000f0"/><rect x="1860.8" y="118.8" width="22.2" height="20.2" rx="3" fill="#0a80ff"/><rect x="1887.5" y="119" width="21.9" height="20" rx="3" fill="#ff8000"/></g>
<path d="M1895.04,113.24 L1898.23,113.51 L1898.57,117.68 L1895.46,118.45 L1894.43,121.64 L1896.50,124.08 L1893.78,127.27 L1891.04,125.62 L1888.06,127.14 L1887.79,130.33 L1883.62,130.67 L1882.85,127.56 L1879.66,126.53 L1877.22,128.60 L1874.03,125.88 L1875.68,123.14 L1874.16,120.16 L1870.97,119.89 L1870.63,115.72 L1873.74,114.95 L1874.77,111.76 L1872.70,109.32 L1875.42,106.13 L1878.16,107.78 L1881.14,106.26 L1881.41,103.07 L1885.58,102.73 L1886.35,105.84 L1889.54,106.87 L1891.98,104.80 L1895.17,107.52 L1893.52,110.26Z" fill="#fff" stroke="#000" stroke-width="1.6" stroke-linejoin="round"/>
<circle cx="1884.4" cy="116.7" r="4.4" fill="#555" stroke="#000" stroke-width="1.4"/>
<rect x="1858.6" y="150.1" width="53.6" height="48.2" rx="6" fill="#000" stroke="#fff" stroke-width="2"/>
<rect x="1857.3" y="205" width="56" height="52" rx="6" fill="#555"/>
<rect x="1864.8" y="212" width="40.4" height="37.6" rx="4.5" fill="#b00000"/>
<rect x="1857.3" y="261.3" width="56" height="52" rx="6" fill="#555"/>
<rect x="1864.8" y="268.3" width="40.4" height="37.6" rx="4.5" fill="#00c800"/>
<rect x="1857.3" y="318" width="56" height="52" rx="6" fill="#555"/>
<rect x="1864.8" y="325" width="40.4" height="37.6" rx="4.5" fill="#8030ff"/>
<rect x="1857.3" y="375" width="56" height="52" rx="6" fill="#555"/>
<rect x="1864.8" y="382" width="40.4" height="37.6" rx="4.5" fill="#f01ec8"/>
<rect x="1857.3" y="432" width="56" height="52" rx="6" fill="#555"/>
<rect x="1864.8" y="439" width="40.4" height="37.6" rx="4.5" fill="#ff5500"/>
<rect x="1857.3" y="488" width="56" height="52" rx="6" fill="#555"/>
<rect x="1864.8" y="495" width="40.4" height="37.6" rx="4.5" fill="#ffb300"/>
<rect x="1857.5" y="867.5" width="55.5" height="51.5" fill="#555" stroke="#666" stroke-width="1"/>
<g fill="#fff"><path d="M1866.2,892.6 V887 Q1866.2,878 1875.2,878 H1894.8 V873.8 L1906,882.1 L1894.8,890.4 V886.2 H1878 Q1874.6,886.2 1874.6,889.6 V892.6 Z"/><path d="M1903.3,893.1 V898.7 Q1903.3,907.4 1894.6,907.4 H1874.8 V912.2 L1864,903.5 L1874.8,895.1 V899.2 H1891.6 Q1894.8,899.2 1894.8,896 V893.1 Z"/></g>
<rect x="1876.8" y="887.8" width="15.6" height="9.9" fill="#eee" stroke="#555" stroke-width="2.6"/>
</svg>
<!-- CANVAS_END -->
</body></html>
